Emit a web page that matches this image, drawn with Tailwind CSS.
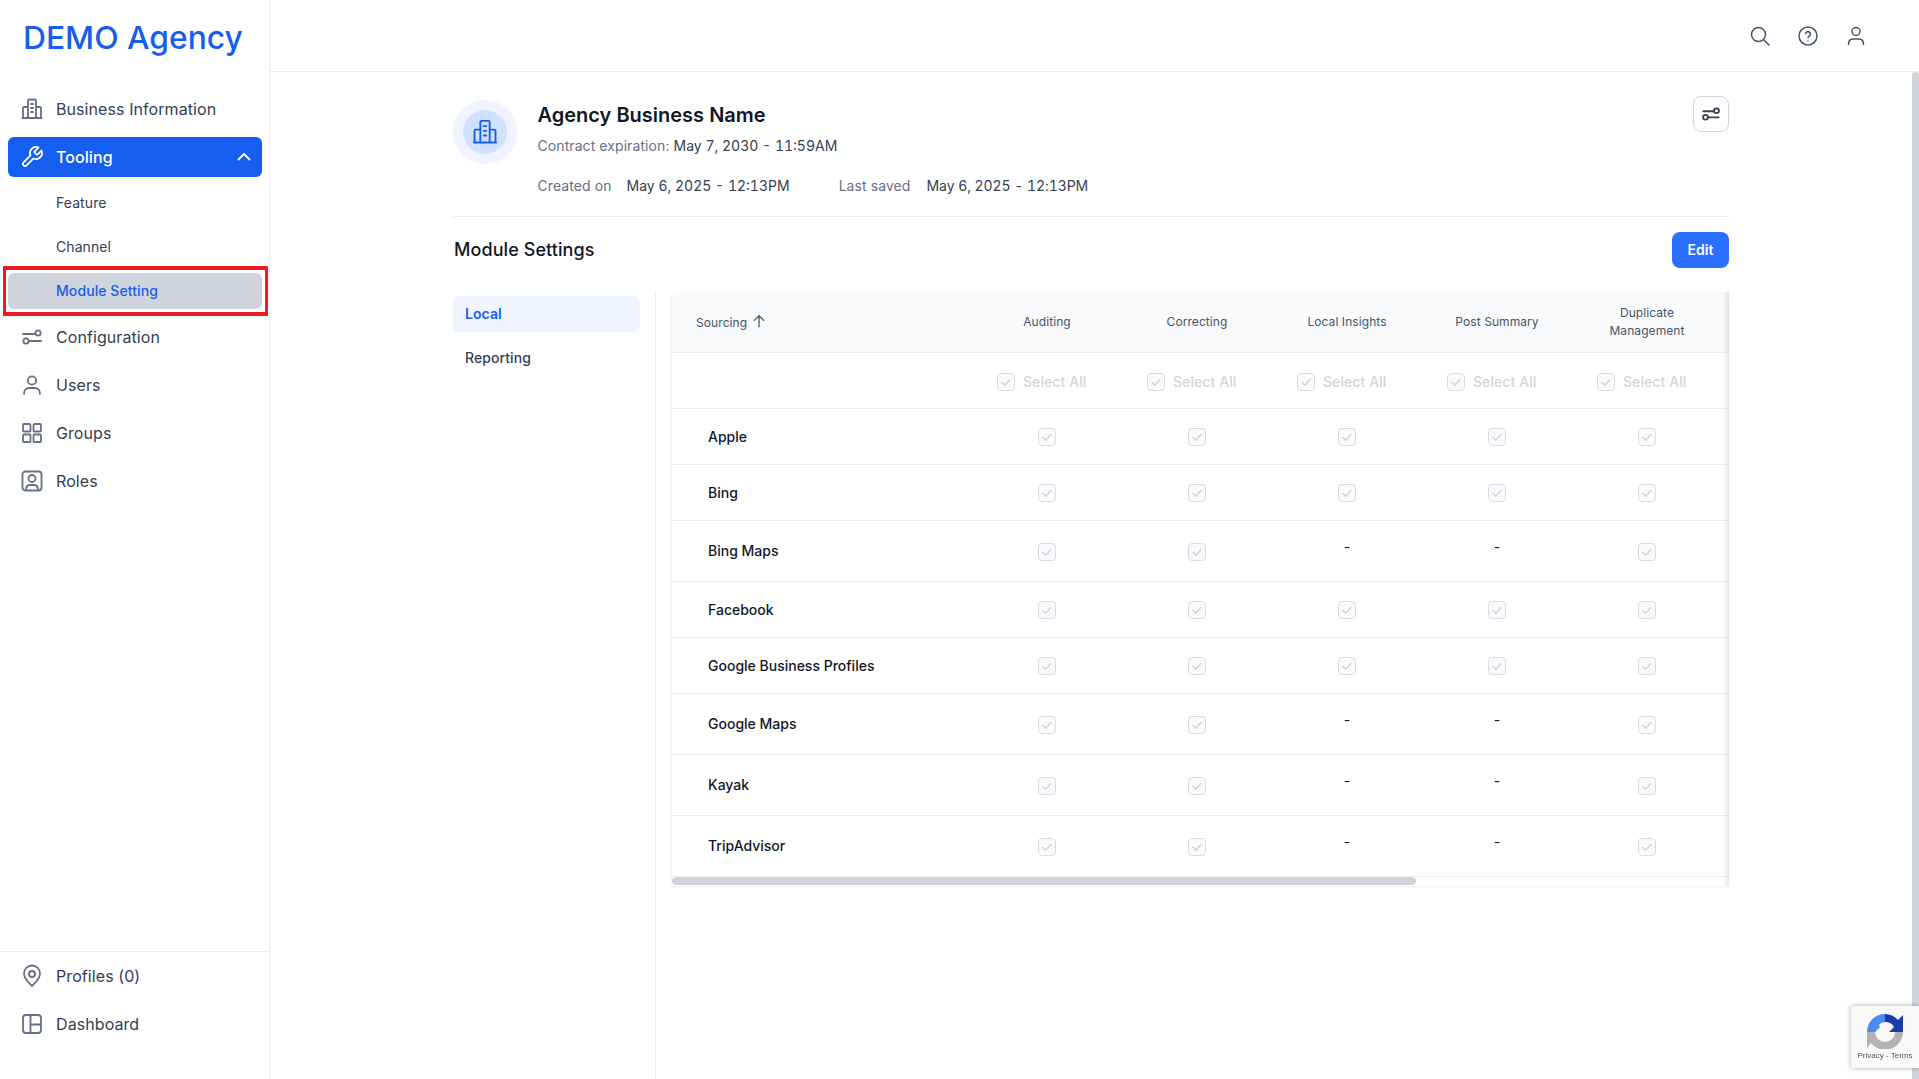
<!DOCTYPE html>
<html lang="en">
<head>
    <meta charset="UTF-8">
    <meta name="viewport" content="width=device-width, initial-scale=1.0">
    <title>Module Settings</title>
    <script src="https://cdn.jsdelivr.net/npm/@tailwindcss/browser@4"></script>
</head>
<body class="bg-white font-['Inter',sans-serif] tracking-[0.005em] text-[#344054] overflow-hidden">
<div class="flex h-[1079px] w-[1919px]">
    <!-- sidebar -->
    <aside class="w-[270px] shrink-0 border-r border-[#eaecf0] flex flex-col relative">
        <div class="h-[85px] pl-[23px] pt-4 text-[31.8px] leading-[44px] tracking-normal font-[450] text-[#155eef]">DEMO Agency</div>
        <nav class="pl-2 pr-[7px] flex flex-col text-base">
            <a class="h-12 flex items-center pl-3 gap-3 text-[#344054]">
                <svg class="w-6 h-6 text-[#667085]" viewBox="0 0 24 24" fill="none" stroke="currentColor" stroke-width="1.8" stroke-linecap="round" stroke-linejoin="round"><path d="M2.500 21h19M8 21V3.500a1 1 0 0 1 1-1h6a1 1 0 0 1 1 1V21M8 10H4a1 1 0 0 0-1 1v10M16 10h4a1 1 0 0 1 1 1v10M11 7h2M11 11h2M11 15h2"/></svg>
                Business Information
            </a>
            <a class="h-10 mt-1 flex items-center pl-3 pr-2 gap-3 bg-[#155eef] rounded-md text-white font-medium">
                <svg class="w-6 h-6" viewBox="0 0 24 24" fill="none" stroke="currentColor" stroke-width="1.8" stroke-linecap="round" stroke-linejoin="round"><path d="M14.7 6.3a1 1 0 0 0 0 1.4l1.6 1.6a1 1 0 0 0 1.4 0l3.77-3.77a6 6 0 0 1-7.94 7.94l-6.91 6.91a2.12 2.12 0 0 1-3-3l6.91-6.91a6 6 0 0 1 7.94-7.94l-3.76 3.76z"/></svg>
                Tooling
                <svg class="w-5 h-5 ml-auto" viewBox="0 0 20 20" fill="none" stroke="currentColor" stroke-width="1.8" stroke-linecap="round" stroke-linejoin="round"><path d="M4.500 12.500 10 7l5.500 5.500"/></svg>
            </a>
            <a class="h-9 mt-2 flex items-center pl-12 text-sm">Feature</a>
            <a class="h-9 mt-2 flex items-center pl-12 text-sm">Channel</a>
            <a class="h-9 mt-2 flex items-center pl-12 text-sm font-medium bg-[#d0d5dd] rounded-md text-[#155eef]">Module Setting</a>
            <a class="h-12 mt-[4px] flex items-center pl-3 gap-3">
                <svg class="w-6 h-6 text-[#667085]" viewBox="0 0 24 24" fill="none" stroke="currentColor" stroke-width="1.8" stroke-linecap="round"><path d="M3 9h12M9 16h12"/><circle cx="18" cy="8" r="2.600"/><circle cx="6" cy="16" r="2.600"/></svg>
                Configuration
            </a>
            <a class="h-12 flex items-center pl-3 gap-3">
                <svg class="w-6 h-6 text-[#667085]" viewBox="0 0 24 24" fill="none" stroke="currentColor" stroke-width="1.8" stroke-linecap="round"><circle cx="12" cy="7.500" r="4.200"/><path d="M4 21c0-3.500 2-6 5-6h6c3 0 5 2.500 5 6"/></svg>
                Users
            </a>
            <a class="h-12 flex items-center pl-3 gap-3">
                <svg class="w-6 h-6 text-[#667085]" viewBox="0 0 24 24" fill="none" stroke="currentColor" stroke-width="1.8" stroke-linejoin="round"><rect x="3" y="3" width="7.500" height="7.500" rx="1"/><rect x="13.500" y="3" width="7.500" height="7.500" rx="1"/><rect x="3" y="13.500" width="7.500" height="7.500" rx="1"/><rect x="13.500" y="13.500" width="7.500" height="7.500" rx="1"/></svg>
                Groups
            </a>
            <a class="h-12 flex items-center pl-3 gap-3">
                <svg class="w-6 h-6 text-[#667085]" viewBox="0 0 24 24" fill="none" stroke="currentColor" stroke-width="1.8" stroke-linecap="round"><rect x="2.500" y="2.500" width="19" height="19" rx="3"/><circle cx="12" cy="9.500" r="3.500"/><path d="M6 21c0-3 1.500-5 4-5h4c2.500 0 4 2 4 5"/></svg>
                Roles
            </a>
        </nav>
        <div class="mt-auto border-t border-[#eaecf0] px-2 h-[128px] text-base">
            <a class="h-12 flex items-center pl-3 gap-3">
                <svg class="w-6 h-6 text-[#667085]" viewBox="0 0 24 24" fill="none" stroke="currentColor" stroke-width="1.8" stroke-linejoin="round"><path d="M12 22c-1-1.500-8-6.500-8-12.500a8 8 0 0 1 16 0C20 15.500 13 20.500 12 22z"/><circle cx="12" cy="10" r="3"/></svg>
                Profiles (0)
            </a>
            <a class="h-12 flex items-center pl-3 gap-3">
                <svg class="w-6 h-6 text-[#667085]" viewBox="0 0 24 24" fill="none" stroke="currentColor" stroke-width="1.8" stroke-linejoin="round"><rect x="3" y="3" width="18" height="18" rx="3"/><path d="M10.500 3v18M10.500 12.500H21"/></svg>
                Dashboard
            </a>
        </div>
        <!-- highlight drawn over the screenshot -->
        <div class="absolute left-[3px] top-[266px] w-[265px] h-[50px] border-x-[3px] border-y-[4px] border-[#ed1c24]"></div>
    </aside>

    <main class="flex-1 flex flex-col relative min-w-0">
        <header class="h-[72px] shrink-0 border-b border-[#eaecf0] flex items-center justify-end gap-6 pr-[51px] text-[#475467]">
            <svg class="w-6 h-6" viewBox="0 0 24 24" fill="none" stroke="currentColor" stroke-width="1.500" stroke-linecap="round"><circle cx="10.500" cy="10.500" r="7"/><path d="m15.700 15.700 5.300 5.300"/></svg>
            <svg class="w-6 h-6" viewBox="0 0 24 24" fill="none" stroke="currentColor" stroke-width="1.500" stroke-linecap="round"><circle cx="12" cy="12" r="9"/><path d="M9.500 9.500a2.500 2.500 0 0 1 4.900.7c0 1.700-2.400 2.200-2.400 3.600"/><path d="M12 17h.01"/></svg>
            <svg class="w-6 h-6" viewBox="0 0 24 24" fill="none" stroke="currentColor" stroke-width="1.500" stroke-linecap="round"><circle cx="12" cy="7.500" r="4"/><path d="M4.500 20.500c0-3.500 2-5.500 4.500-5.500h6c2.500 0 4.500 2 4.500 5.500"/></svg>
        </header>

        <div class="flex-1 pl-[183px] pr-[190px] flex flex-col min-h-0">
            <!-- business header -->
            <div class="h-[145px] border-b border-[#eaecf0] flex pt-7 shrink-0">
                <div class="w-16 h-16 rounded-full bg-[#eff4ff] flex items-center justify-center shrink-0">
                    <div class="w-11 h-11 rounded-full bg-[#d1e0ff] flex items-center justify-center text-[#155eef]">
                        <svg class="w-7 h-7" viewBox="0 0 24 24" fill="none" stroke="currentColor" stroke-width="1.600" stroke-linecap="round" stroke-linejoin="round"><path d="M2.500 21h19M8 21V3.500a1 1 0 0 1 1-1h6a1 1 0 0 1 1 1V21M8 10H4a1 1 0 0 0-1 1v10M16 10h4a1 1 0 0 1 1 1v10M11 7h2M11 11h2M11 15h2"/></svg>
                    </div>
                </div>
                <div class="ml-[20.5px]">
                    <div class="text-xl font-semibold leading-[30px] tracking-normal text-[#101828]">Agency Business Name</div>
                    <div class="text-sm leading-5 mt-[6px] text-[#667085]">Contract expiration: <span class="text-[#344054] tabular-nums tracking-normal">May 7, 2030 - 11:59AM</span></div>
                    <div class="text-sm leading-5 mt-5 flex text-[#667085]">
                        <span>Created on</span><span class="ml-[15px] text-[#344054] tabular-nums tracking-normal">May 6, 2025 - 12:13PM</span>
                        <span class="ml-[49px]">Last saved</span><span class="ml-4 text-[#344054] tabular-nums tracking-[-0.005em]">May 6, 2025 - 12:13PM</span>
                    </div>
                </div>
                <button class="ml-auto w-9 h-9 mt-[-4px] rounded-lg border border-[#d0d5dd] flex items-center justify-center text-[#344054]">
                    <svg class="w-[22px] h-[22px]" viewBox="0 0 20 20" fill="none" stroke="currentColor" stroke-width="1.600" stroke-linecap="round"><path d="M3 7.500h9.500M7.500 13H17"/><circle cx="15" cy="7" r="2.200"/><circle cx="5" cy="13" r="2.200"/></svg>
                </button>
            </div>

            <div class="h-[75px] shrink-0 flex items-start justify-between pt-[15px]">
                <h2 class="pl-px text-lg leading-9 font-medium text-[#101828]">Module Settings</h2>
                <button class="w-[57px] h-9 rounded-lg bg-[#2970ff] text-white text-sm font-semibold">Edit</button>
            </div>

            <div class="flex-1 flex min-h-0">
                <div class="w-[203px] shrink-0 border-r border-[#eaecf0] pt-1 pr-[15px]">
                    <div class="h-9 rounded-md bg-[#eff4ff] text-[#155eef] text-sm font-semibold flex items-center pl-3">Local</div>
                    <div class="h-9 mt-2 text-sm font-medium flex items-center pl-3">Reporting</div>
                </div>
                <!-- table -->
                <div class="ml-[15px] w-[1058px] h-[594px] relative rounded-t-md shadow-[0_1px_2px_rgba(16,24,40,0.08)] border-l border-[#f2f4f7]">
                    <div id="rows"></div>
                    <div class="h-2 bg-white relative">
                        <div class="absolute left-0 top-0 w-[744px] h-2 rounded-full bg-[#d0d5dd]"></div>
                    </div>
                    <div class="absolute right-0 top-0 bottom-0 w-[6px] bg-gradient-to-r from-transparent to-black/10"></div>
                </div>
            </div>
        </div>

        <!-- page scrollbar -->
        <div class="absolute right-0 top-[72px] bottom-0 w-[7px] rounded-t bg-[#d0d5dd]"></div>
    </main>
</div>

<!-- recaptcha badge -->
<div class="fixed right-0 top-[1006px] w-[68px] h-[62px] bg-[#f9f9f9] shadow-[0_0_5px_rgba(0,0,0,0.35)] rounded-l-[2px] flex flex-col items-center pt-[7px]">
    <svg class="w-9 h-9" viewBox="0 0 36 36">
        <path d="M0 19h8a10 10 0 0 0 20 0h8a18 18 0 0 1-32 11l-4 5z" fill="#b4b4b4"/>
        <path d="M0 19a18 18 0 0 1 18-18v8l-4 1-2 2 1 2-5 5z" fill="#4a8af4"/>
        <path d="M18 1a18 18 0 0 1 13 6l5-5v17H22l5-5a10 10 0 0 0-9-5z" fill="#1c3aa9"/>
    </svg>
    <div class="text-[8px] leading-[10px] mt-[2px] tracking-normal text-[#555] font-['Liberation_Sans',sans-serif] whitespace-nowrap">Privacy - Terms</div>
</div>

<script>
    const checkbox = '<span class="w-[18px] h-[18px] shrink-0 rounded-[4px] border border-[#d8dbe3] bg-[#f9fafb] flex items-center justify-center"><svg class="w-3 h-3 text-[#d0d5dd]" viewBox="0 0 12 12" fill="none" stroke="currentColor" stroke-width="1.600" stroke-linecap="round" stroke-linejoin="round"><path d="m2 6.500 2.800 2.800L10 3.500"/></svg></span>';
    const rowClass = 'grid grid-cols-[300px_150px_150px_150px_150px_150px] border-b border-[#eaecf0]';

    const headers = ['Auditing', 'Correcting', 'Local Insights', 'Post Summary', 'Duplicate<br>Management'];
    let html = '<div class="' + rowClass + ' h-[61px] bg-[#f9fafb] text-xs leading-[18px] text-[#475467]">';
    html += '<div class="flex items-center pl-6 pt-[2px] gap-[5px]">Sourcing <svg class="w-3.5 h-3.5 -mt-[4px]" viewBox="0 0 12 12" fill="none" stroke="currentColor" stroke-width="1.100" stroke-linecap="round" stroke-linejoin="round"><path d="M6 11V1.500M2 5.500 6 1.500l4 4"/></svg></div>';
    headers.forEach(h => { html += '<div class="flex items-center justify-center text-center">' + h + '</div>'; });
    html += '</div>';

    html += '<div class="' + rowClass + ' h-[56px]"><div></div>';
    for (let i = 0; i < 5; i++) {
        html += '<div class="flex items-center pl-[25px] pt-[2px] gap-2 text-sm font-medium text-[#d0d5dd]">' + checkbox + 'Select All</div>';
    }
    html += '</div>';

    // name, row height, whether Local Insights and Post Summary are available
    const sources = [
        ['Apple', 'h-[56px]', true],
        ['Bing', 'h-[56px]', true],
        ['Bing Maps', 'h-[61px]', false],
        ['Facebook', 'h-[56px]', true],
        ['Google Business Profiles', 'h-[56px]', true],
        ['Google Maps', 'h-[61px]', false],
        ['Kayak', 'h-[61px]', false],
        ['TripAdvisor', 'h-[61px]', false],
    ];
    const dash = '<div class="flex items-center justify-center text-sm text-[#101828] pb-2">-</div>';
    const box = '<div class="flex items-center justify-center">' + checkbox + '</div>';
    const tallBox = '<div class="flex items-center justify-center pt-[2px]">' + checkbox + '</div>';
    sources.forEach(([name, height, full]) => {
        const b = full ? box : tallBox;
        html += '<div class="' + rowClass + ' ' + height + '">';
        html += '<div class="flex items-center pl-9 text-sm font-[450] tracking-normal text-[#101828]">' + name + '</div>';
        html += b + b + (full ? b + b : dash + dash) + b + '</div>';
    });
    document.getElementById('rows').innerHTML = html;
</script>
</body>
</html>
